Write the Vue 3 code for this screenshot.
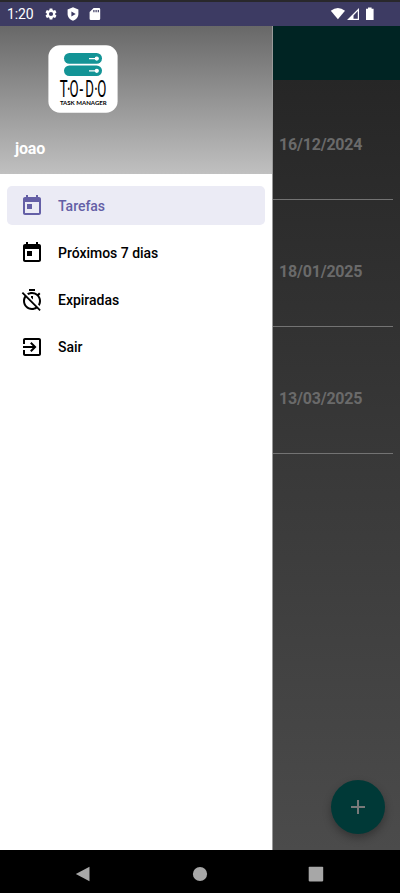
<script setup>
const items = [
  { label: 'Tarefas', icon: 'today', active: true },
  { label: 'Próximos 7 dias', icon: 'today' },
  { label: 'Expiradas', icon: 'timerOff' },
  { label: 'Sair', icon: 'exit' },
]
const icons = {
  today: 'M19 3h-1V1h-2v2H8V1H6v2H5c-1.11 0-1.99.9-1.99 2L3 19c0 1.1.89 2 2 2h14c1.1 0 2-.9 2-2V5c0-1.1-.9-2-2-2zm0 16H5V8h14v11zM7 10h5v5H7z',
  timerOff: 'M19.04 4.55l-1.42 1.42C16.07 4.74 14.12 4 12 4c-1.83 0-3.53.55-4.95 1.48l1.46 1.46C9.53 6.35 10.73 6 12 6c3.87 0 7 3.13 7 7 0 1.27-.35 2.47-.94 3.49l1.45 1.45C20.45 16.53 21 14.83 21 13c0-2.12-.74-4.07-1.97-5.61l1.42-1.42-1.41-1.42zM15 1H9v2h6V1zm-4 8.44l2 2V8h-2v1.44zM3.02 4L1.75 5.27 4.5 8.03C3.55 9.45 3 11.16 3 13c0 4.97 4.02 9 9 9 1.84 0 3.55-.55 4.98-1.5l2.5 2.5 1.27-1.27-7.71-7.71L3.02 4zM12 20c-3.87 0-7-3.13-7-7 0-1.28.35-2.48.95-3.52l9.56 9.56c-1.03.61-2.23.96-3.51.96z',
  exit: 'M10.09 15.59L11.5 17l5-5-5-5-1.41 1.41L12.67 11H3v2h9.67l-2.58 2.59zM19 3H5c-1.11 0-2 .9-2 2v4h2V5h14v14H5v-4H3v4c0 1.1.89 2 2 2h14c1.1 0 2-.9 2-2V5c0-1.1-.9-2-2-2z',
}
const dates = ['16/12/2024', '18/01/2025', '13/03/2025']
</script>

<template>
  <div class="screen">
    <header class="status">
      <span class="clock">1:20</span>
      <svg class="gear" viewBox="0 0 24 24"><path d="M19.14 12.94c.04-.3.06-.61.06-.94 0-.32-.02-.64-.07-.94l2.03-1.58c.18-.14.23-.41.12-.61l-1.92-3.32c-.12-.22-.37-.29-.59-.22l-2.39.96c-.5-.38-1.03-.7-1.62-.94l-.36-2.54c-.04-.24-.24-.41-.48-.41h-3.84c-.24 0-.43.17-.47.41l-.36 2.54c-.59.24-1.13.57-1.62.94l-2.39-.96c-.22-.08-.47 0-.59.22L2.74 8.87c-.12.21-.08.47.12.61l2.03 1.58c-.05.3-.09.63-.09.94s.02.64.07.94l-2.03 1.58c-.18.14-.23.41-.12.61l1.92 3.32c.12.22.37.29.59.22l2.39-.96c.5.38 1.03.7 1.62.94l.36 2.54c.05.24.24.41.48.41h3.84c.24 0 .44-.17.47-.41l.36-2.54c.59-.24 1.13-.56 1.62-.94l2.39.96c.22.08.47 0 .59-.22l1.92-3.32c.12-.22.07-.47-.12-.61l-2.01-1.58zM12 15.6A3.6 3.6 0 1 1 12 8.4a3.6 3.6 0 0 1 0 7.2z" /></svg>
      <svg class="shield" viewBox="0 0 12 14"><path fill-rule="evenodd" d="M6 .3L11.4 2.4V7C11.4 10 9 12.8 6 13.7C3 12.8.6 10 .6 7V2.4ZM4.4 4.4V9.6L8.7 7Z" /></svg>
      <svg class="sd" viewBox="0 0 12 14"><path fill-rule="evenodd" d="M4.6 1H10Q11.2 1 11.2 2.2V11.8Q11.2 13 10 13H1.8Q.6 13 .6 11.8V5ZM4.3 2.9V5.3H5.5V2.9ZM6.5 2.9V5.3H7.7V2.9ZM8.7 2.9V5.3H9.9V2.9Z" /></svg>
      <svg class="signals" viewBox="0 0 46 16">
        <path d="M.8 4.8Q7.8-.8 15 4.8L7.9 13.2Z" />
        <path fill-rule="evenodd" d="M17 14L29 2V14ZM23.5 9.6V12.8H27.8V5.1Z" />
        <path d="M36 2.8H38V1.4H41.6V2.8H43.6V14H36Z" />
      </svg>
    </header>

    <main class="body">
      <aside class="drawer">
        <div class="head">
          <svg class="logo" viewBox="0 0 70 68">
            <rect x=".4" y=".3" width="69.2" height="67.4" rx="11.5" fill="#fff" />
            <rect x="16" y="8" width="38" height="10.8" rx="5.4" fill="#139496" />
            <rect x="16" y="20.4" width="38" height="10.6" rx="5.3" fill="#139496" />
            <g stroke="#fff" stroke-width="1.2" fill="#fff">
              <path d="M41 13.6H47M41 25.8H47" />
              <circle cx="48.8" cy="13.6" r="1.5" /><circle cx="48.8" cy="25.8" r="1.5" />
            </g>
            <text class="wordmark" transform="scale(.56 1)" x="21.2 33.8 38.2 56.4 66.6 82.6 88" y="52.4">T·O-D·O</text>
            <text class="tagline" x="11.9" y="59.5" textLength="46.8" lengthAdjust="spacingAndGlyphs">TASK MANAGER</text>
          </svg>
          <div class="user">joao</div>
        </div>
        <nav class="menu">
          <a v-for="item in items" :key="item.label" class="item" :class="{ active: item.active }">
            <svg viewBox="0 0 24 24"><path :d="icons[item.icon]" /></svg>
            <span>{{ item.label }}</span>
          </a>
        </nav>
      </aside>
      <section class="content">
        <div class="appbar"></div>
        <div v-for="date in dates" :key="date" class="task">{{ date }}</div>
        <button class="fab"><svg viewBox="0 0 14 14"><path d="M7 0V14M0 7H14" /></svg></button>
      </section>
    </main>

    <footer class="nav">
      <svg viewBox="0 0 16 16"><path d="M14.5 .8V15.2L.8 8Z" /></svg>
      <svg viewBox="0 0 16 16"><circle cx="8" cy="8" r="7.1" /></svg>
      <svg viewBox="0 0 16 16"><rect x=".7" y=".8" width="14.5" height="14.6" rx=".8" /></svg>
    </footer>
  </div>
</template>

<style>
body { margin: 0; background: #000; }
</style>

<style scoped>
.screen { width: 400px; height: 893px; display: flex; flex-direction: column; overflow: hidden; background: #000; font-family: Roboto, sans-serif; }
.status { box-sizing: border-box; height: 25.5px; flex: none; border-top: 2px solid #29282c; background: #3d3b63; display: flex; align-items: center; padding: 0 24px 0 7px; color: #fff; fill: #fff; }
.clock { font-size: 14px; width: 37px; line-height: 22px; padding-top: 1px; letter-spacing: -.1px; }
.gear { width: 14px; height: 14px; }
.shield { width: 12px; height: 14px; margin-left: 8.5px; }
.sd { width: 12px; height: 14px; margin-left: 10px; }
.signals { width: 46px; height: 16px; margin-left: auto; }
.body { flex: 1; min-height: 0; display: flex; }
.drawer { box-sizing: border-box; width: 273px; flex: none; background: #fff; border-right: 1px solid #999; }
.head { box-sizing: border-box; height: 148.5px; padding: 19.5px 0 0 14px; background: linear-gradient(#686868, #c0c0c0); }
.logo { display: block; width: 70px; height: 68px; margin-left: 34px; }
.wordmark { font-family: Roboto, sans-serif; font-size: 23.6px; }
.tagline { font-family: Lato, sans-serif; font-weight: 700; font-size: 6px; }
.user { margin: 26px 0 0 1px; color: #fff; font-size: 16px; font-weight: 700; line-height: 20px; letter-spacing: -.2px; }
.menu { display: flex; flex-direction: column; gap: 8px; padding: 12px 7px; }
.item { box-sizing: border-box; height: 39px; border-radius: 5px; display: flex; align-items: center; padding-left: 13px; gap: 14px; font-size: 14px; font-weight: 500; letter-spacing: -.02px; color: #000; }
.item svg { width: 24px; height: 24px; fill: currentColor; }
.active { background: #ebebf5; color: #645fa6; }
.content { flex: 1; min-width: 0; position: relative; background: linear-gradient(#222 0, #262626 50px, #4b4b4b 100%); }
.appbar { height: 54.5px; background: #002423; }
.task { box-sizing: border-box; height: 127.2px; margin-right: 7px; padding-left: 6px; border-bottom: 1px solid #737373; color: #6a6a6a; font-size: 16px; font-weight: 700; line-height: 20px; letter-spacing: -.2px; padding-top: 62.3px; }
.appbar + .task { height: 119.6px; padding-top: 54.7px; }
.fab { position: absolute; right: 15px; bottom: 16px; width: 54px; height: 54px; padding: 0; border: 0; border-radius: 50%; background: #003937; box-shadow: 0 4px 8px rgba(0, 0, 0, .3); display: flex; align-items: center; justify-content: center; }
.fab svg { width: 14px; height: 14px; stroke: #797979; stroke-width: 2; }
.nav { height: 43px; flex: none; background: #000; display: flex; justify-content: space-between; align-items: center; box-sizing: border-box; padding: 4px 76px 0 75px; fill: #a7a7a7; }
.nav svg { width: 16px; height: 16px; }
.nav svg:nth-child(2) { margin-left: 1px; }
</style>
